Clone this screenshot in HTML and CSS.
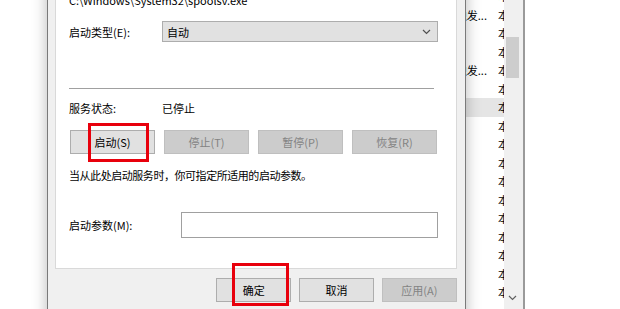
FILE: index.html
```html
<!DOCTYPE html>
<html lang="zh-CN">
<head>
<meta charset="utf-8">
<title>Print Spooler 属性</title>
<link rel="stylesheet" href="styles.css">
</head>
<body>
<div class="desk">
  <div class="services">
    <div class="list">
      <div class="row"><span class="c1"></span><span class="c2">本地系统</span></div>
      <div class="row"><span class="c1">手动(触发...</span><span class="c2">本地系统</span></div>
      <div class="row"><span class="c1"></span><span class="c2">本地系统</span></div>
      <div class="row"><span class="c1"></span><span class="c2">本地系统</span></div>
      <div class="row"><span class="c1">手动(触发...</span><span class="c2">本地系统</span></div>
      <div class="row"><span class="c1"></span><span class="c2">本地系统</span></div>
      <div class="row sel"><span class="c1"></span><span class="c2">本地系统</span></div>
      <div class="row"><span class="c1"></span><span class="c2">本地系统</span></div>
      <div class="row"><span class="c1"></span><span class="c2">本地系统</span></div>
      <div class="row"><span class="c1"></span><span class="c2">本地系统</span></div>
      <div class="row"><span class="c1"></span><span class="c2">本地系统</span></div>
      <div class="row"><span class="c1"></span><span class="c2">本地系统</span></div>
      <div class="row"><span class="c1"></span><span class="c2">本地系统</span></div>
      <div class="row"><span class="c1"></span><span class="c2">本地系统</span></div>
      <div class="row"><span class="c1"></span><span class="c2">本地系统</span></div>
      <div class="row"><span class="c1"></span><span class="c2">本地系统</span></div>
      <div class="row"><span class="c1"></span><span class="c2">本地系统</span></div>
    </div>
    <div class="vscroll">
      <div class="thumb"></div>
      <svg class="down" width="9" height="6" viewBox="0 0 9 6"><path d="M1 1 L4.5 4.5 L8 1" fill="none" stroke="#606060" stroke-width="1.2"/></svg>
    </div>
  </div>

  <div class="dialog">
    <div class="panel">
      <div class="path">C:\Windows\System32\spoolsv.exe</div>
      <div class="field type">
        <span class="lbl">启动类型(E):</span>
        <div class="select"><span>自动</span>
          <svg class="chev" width="9" height="6" viewBox="0 0 9 6"><path d="M1 1 L4.5 4.5 L8 1" fill="none" stroke="#505050" stroke-width="1.2"/></svg>
        </div>
      </div>
      <div class="sep"></div>
      <div class="field status">
        <span class="lbl">服务状态:</span><span>已停止</span>
      </div>
      <div class="btns">
        <button class="btn">启动(S)</button>
        <button class="btn off">停止(T)</button>
        <button class="btn off">暂停(P)</button>
        <button class="btn off">恢复(R)</button>
      </div>
      <div class="hint">当从此处启动服务时，你可指定所适用的启动参数。</div>
      <div class="field param">
        <span class="lbl2">启动参数(M):</span>
        <div class="input"></div>
      </div>
    </div>
    <div class="footer">
      <button class="btn fbtn">确定</button>
      <button class="btn fbtn">取消</button>
      <button class="btn fbtn off">应用(A)</button>
    </div>
  </div>

  <div class="mark m1"></div>
  <div class="mark m2"></div>
</div>
</body>
</html>
```
FILE: styles.css
```css
html, body {
  margin: 0;
  padding: 0;
  background: #ffffff;
}
body {
  width: 620px;
  height: 309px;
  overflow: hidden;
  font-family: "Noto Sans CJK SC", "Noto Sans", "Liberation Sans", sans-serif;
  font-size: 11px;
  color: #000;
}
.desk {
  position: relative;
  width: 620px;
  height: 309px;
  overflow: hidden;
}

/* background services window */
.services {
  position: absolute;
  left: 280px;
  top: 0;
  width: 243px;
  height: 309px;
  display: flex;
  background: #fff;
  border-right: 2px solid #9a9a9a;
}
.list {
  width: 224px;
  overflow: hidden;
  margin-top: -13px;
}
.row {
  height: 18.5px;
  display: flex;
  align-items: center;
  white-space: nowrap;
  line-height: 18.5px;
}
.row.sel {
  background: #e5e5e5;
}
.c1 {
  width: 212px;
  flex: none;
  box-sizing: border-box;
  padding-right: 5px;
  overflow: hidden;
  text-align: right;
}
.c2 {
  padding-left: 6px;
  flex: none;
}
.vscroll {
  width: 19px;
  flex: none;
  background: #f0f0f0;
  position: relative;
}
.thumb {
  margin-left: 2px;
  margin-top: 37px;
  width: 13px;
  height: 41px;
  background: #cdcdcd;
}
.down {
  position: absolute;
  left: 4px;
  top: 295px;
}

/* dialog */
.dialog {
  position: absolute;
  left: 47px;
  top: -60px;
  width: 419px;
  height: 420px;
  box-sizing: border-box;
  background: #f0f0f0;
  border-left: 1px solid #7a7a7a;
  border-right: 1px solid #7a7a7a;
  box-shadow: 0 0 14px rgba(0, 0, 0, 0.28);
  padding: 40px 8px 0 7px;
}
.panel {
  background: #fff;
  border: 1px solid #d9d9d9;
  padding: 11px 18px 30px 13px;
  display: flex;
  flex-direction: column;
}
.path {
  line-height: 16px;
  height: 16px;
  white-space: nowrap;
}
.field {
  display: flex;
  align-items: center;
}
.lbl {
  width: 93px;
  flex: none;
}
.lbl2 {
  width: 112px;
  flex: none;
}
.type {
  margin-top: 13px;
  height: 21px;
}
.select {
  flex: 1;
  height: 21px;
  box-sizing: border-box;
  border: 1px solid #adadad;
  background: #e1e1e1;
  display: flex;
  align-items: center;
  justify-content: space-between;
  padding: 0 6px 0 4px;
}
.sep {
  margin-top: 46px;
  height: 1px;
  width: 365px;
  background: #a0a0a0;
}
.status {
  margin-top: 11px;
  height: 16px;
  line-height: 16px;
}
.btns {
  margin-top: 14px;
  margin-left: 1px;
  display: flex;
  gap: 9px;
}
.btn {
  font-family: inherit;
  font-size: 11px;
  color: #000;
  width: 85px;
  height: 24px;
  padding: 0;
  margin: 0;
  border: 1px solid #adadad;
  background: #e1e1e1;
  line-height: 20px;
}
.btn.off {
  background: #cccccc;
  border-color: #bfbfbf;
  color: #838383;
}
.hint {
  margin-top: 13px;
  line-height: 16px;
  white-space: nowrap;
  letter-spacing: -0.45px;
}
.param {
  margin-top: 29px;
  height: 26px;
}
.input {
  flex: 1;
  height: 26px;
  box-sizing: border-box;
  border: 1px solid #a0a0a0;
  background: #fff;
}
.footer {
  margin-top: 9px;
  padding-left: 161px;
  display: flex;
  gap: 7.5px;
}
.fbtn {
  width: 76px;
}

/* red highlight marks */
.mark {
  position: absolute;
  border: 3px solid #e8000c;
  box-sizing: border-box;
}
.m1 {
  left: 88px;
  top: 123px;
  width: 61px;
  height: 39px;
}
.m2 {
  left: 232px;
  top: 263px;
  width: 57px;
  height: 43px;
}
```
